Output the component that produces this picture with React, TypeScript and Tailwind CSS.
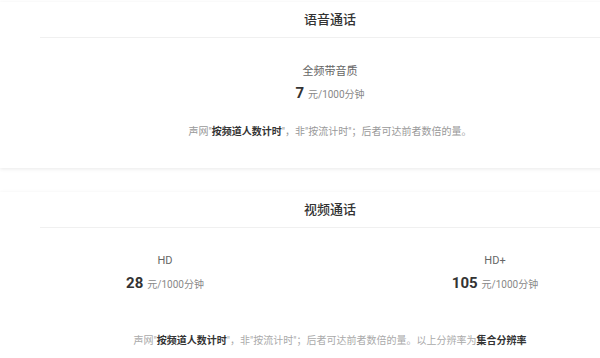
const FONT = { fontFamily: 'Roboto, "Noto Sans CJK SC", sans-serif' }

function Price({ value }: { value: string }) {
  return (
    <div className="h-[20px] flex items-baseline justify-center leading-[20px]">
      <span className="text-[15px] font-bold text-[#333]">{value}</span>
      <span className="ml-[4px] text-[10px] text-[#888]">元/1000分钟</span>
    </div>
  )
}

function CardHeader({ title }: { title: string }) {
  return (
    <div className="mx-10 h-[36px] flex items-center justify-center border-b border-[#f0f0f0]">
      <h3 className="text-[13px] font-medium text-[#333] pt-[1px]">{title}</h3>
    </div>
  )
}

export default function App() {
  return (
    <div className="w-[600px] h-[358px] overflow-hidden bg-white" style={FONT}>
      <div className="w-[660px] pt-[2px]">
        {/* Voice pricing */}
        <section className="bg-white shadow-[0_1px_4px_rgba(0,0,0,0.09)]">
          <CardHeader title="语音通话" />
          <div className="pt-[26px] pb-[29px] flex flex-col items-center">
            <div className="text-[11px] leading-[16px] text-[#666]">全频带音质</div>
            <div className="mt-[3px]">
              <Price value="7" />
            </div>
            <p className="mt-[22px] text-[10px] leading-[14px] text-[#999]">
              声网"<span className="font-bold text-[#333]">按频道人数计时</span>"，非"按流计时"；后者可达前者数倍的量。
            </p>
          </div>
        </section>

        {/* Video pricing */}
        <section className="mt-[24px] bg-white shadow-[0_1px_4px_rgba(0,0,0,0.09)]">
          <CardHeader title="视频通话" />
          <div className="pt-[25px] pb-[24px]">
            <div className="grid grid-cols-2">
              {[
                { name: 'HD', price: '28' },
                { name: 'HD+', price: '105' },
              ].map((tier) => (
                <div key={tier.name} className="flex flex-col items-center">
                  <div className="text-[11px] leading-[16px] text-[#666]">{tier.name}</div>
                  <div className="mt-[4px]">
                    <Price value={tier.price} />
                  </div>
                </div>
              ))}
            </div>
            <p className="mt-[41px] text-center text-[10px] leading-[14px] text-[#aaa]">
              声网"<span className="font-bold text-[#333]">按频道人数计时</span>"，非"按流计时"；后者可达前者数倍的量。以上分辨率为<span className="font-bold text-[#333]">集合分辨率</span>
            </p>
          </div>
        </section>
      </div>
    </div>
  )
}
